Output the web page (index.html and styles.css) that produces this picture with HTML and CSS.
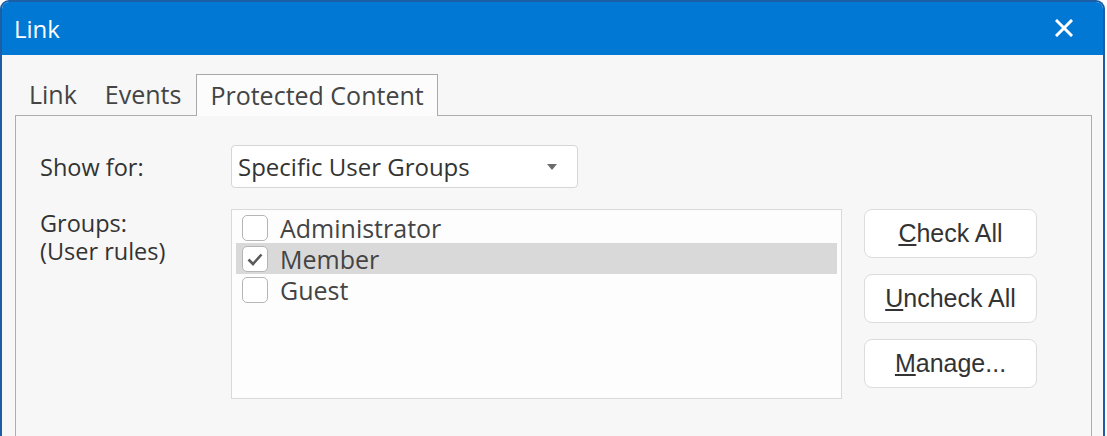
FILE: index.html
```html
<!DOCTYPE html>
<html lang="en">
<head>
  <meta charset="UTF-8" />
  <title>Link</title>
  <link rel="stylesheet" href="styles.css">
</head>
<body>
  <div class="window">
    <div class="titlebar">
      <span class="title">Link</span>
      <button class="close" type="button" aria-label="Close">
        <svg width="18" height="18" viewBox="0 0 18 18">
          <path d="M2 2 L16 16 M16 2 L2 16" stroke="#fff" stroke-width="3" stroke-linecap="square" fill="none"/>
        </svg>
      </button>
    </div>

    <div class="content">
      <div class="tabs">
        <div class="tab">Link</div>
        <div class="tab">Events</div>
        <div class="tab active">Protected Content</div>
      </div>

      <div class="panel">
        <div class="row">
          <label class="label" for="showFor">Show for:</label>
          <div class="select" id="showFor">
            <span>Specific User Groups</span>
            <svg class="arrow" width="10" height="6" viewBox="0 0 10 6"><path d="M0 0 H10 L5 6 Z" fill="#6b6b6b"/></svg>
          </div>
        </div>

        <div class="row groups">
          <div class="label">
            <div class="line">Groups:</div>
            <div class="line">(User rules)</div>
          </div>
          <div class="listbox">
            <div class="item">
              <span class="check"></span>
              <span>Administrator</span>
            </div>
            <div class="item selected">
              <span class="check">
                <svg width="18" height="18" viewBox="0 0 18 18"><path d="M2.5 9.5 L7 14 L15.5 4.5" stroke="#5a5a5a" stroke-width="2.6" fill="none"/></svg>
              </span>
              <span>Member</span>
            </div>
            <div class="item">
              <span class="check"></span>
              <span>Guest</span>
            </div>
          </div>
          <div class="buttons">
            <button class="btn" type="button"><u>C</u>heck All</button>
            <button class="btn" type="button"><u>U</u>ncheck All</button>
            <button class="btn" type="button"><u>M</u>anage...</button>
          </div>
        </div>
      </div>
    </div>
  </div>
</body>
</html>
```

FILE: styles.css
```css
body {
  margin: 0;
  background-color: #ffffff;
  font-family: 'Open Sans', 'Noto Sans', sans-serif;
  overflow: hidden;
}

.window {
  width: 1105px;
  height: 460px;
  box-sizing: border-box;
  border: 2px solid #1b5ea6;
  border-bottom: none;
  border-radius: 9px 9px 0 0;
  background-color: #f7f7f7;
  overflow: hidden;
}

.titlebar {
  display: flex;
  align-items: center;
  justify-content: space-between;
  height: 53px;
  padding: 0 30px 0 12px;
  background-color: #0078d4;
}

.title {
  color: #ffffff;
  font-size: 24px;
}

.close {
  background: none;
  border: none;
  padding: 0;
  display: flex;
  margin-top: -2px;
}

.content {
  padding: 18px 11px 0 13px;
}

.tabs {
  display: flex;
  align-items: flex-end;
}

.tab {
  height: 41px;
  padding: 0 13px;
  border: 1px solid transparent;
  border-bottom: none;
  font-size: 25px;
  line-height: 41px;
  color: #444;
}

.tab.active {
  margin-left: 1px;
  background-color: #fcfcfc;
  border-color: #a9a9a9;
  position: relative;
  top: 1px;
}

.panel {
  border: 1px solid #adadad;
  padding: 29px 24px 40px 24px;
}

.row {
  display: flex;
  align-items: center;
}

.label {
  width: 191px;
  flex-shrink: 0;
  font-size: 23.5px;
  color: #333;
}

.select {
  display: flex;
  align-items: center;
  justify-content: space-between;
  width: 347px;
  height: 43px;
  box-sizing: border-box;
  padding: 0 20px 0 6px;
  background-color: #ffffff;
  border: 1px solid #d6d6d6;
  border-radius: 4px;
  font-size: 24px;
  color: #333;
}

.groups {
  align-items: flex-start;
  margin-top: 21px;
}

.groups .line {
  height: 28px;
  line-height: 28px;
}

.listbox {
  width: 611px;
  height: 190px;
  box-sizing: border-box;
  padding: 2px 4px;
  background-color: #fdfdfd;
  border: 1px solid #d9d9d9;
}

.item {
  display: flex;
  align-items: center;
  height: 31px;
  font-size: 25px;
  color: #444;
}

.item.selected {
  background-color: #d9d9d9;
}

.check {
  display: flex;
  align-items: center;
  justify-content: center;
  width: 26px;
  height: 26px;
  box-sizing: border-box;
  margin: 0 12px 0 6px;
  background-color: #ffffff;
  border: 1px solid #b5b5b5;
  border-radius: 5px;
}

.buttons {
  display: flex;
  flex-direction: column;
  gap: 16px;
  margin-left: 22px;
}

.btn {
  width: 173px;
  height: 49px;
  background-color: #ffffff;
  border: 1px solid #dcdcdc;
  border-radius: 8px;
  font-family: 'Liberation Sans', Arial, sans-serif;
  font-size: 25px;
  color: #333;
  cursor: pointer;
}
```
